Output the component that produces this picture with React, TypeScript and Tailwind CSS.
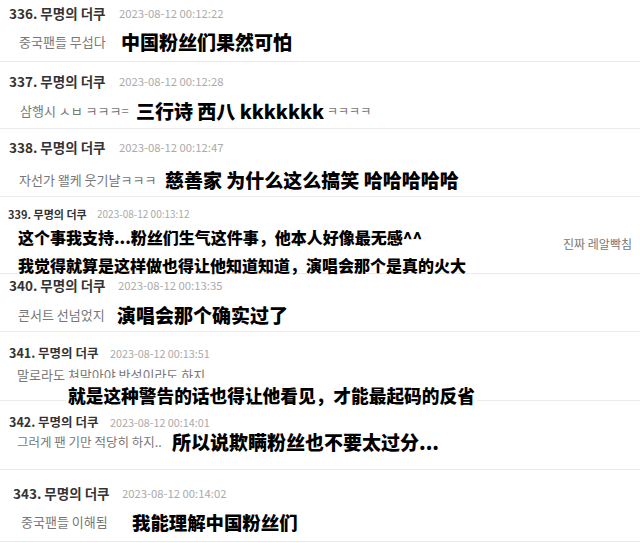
const kr = "font-['Noto_Sans_CJK_KR','Noto_Sans_CJK_SC',sans-serif]";
const zh = "font-['Noto_Sans_CJK_SC',sans-serif] font-black text-black";

function Head({
  no,
  time,
  nameW,
  pl,
  size = "text-[13.5px]",
  dateSize = "text-[11.3px]",
  lead = "leading-[20px]",
}: {
  no: number;
  time: string;
  nameW: string;
  pl: string;
  size?: string;
  dateSize?: string;
  lead?: string;
}) {
  return (
    <div className={`flex items-center ${pl} ${lead} ${kr}`}>
      <span className={`${nameW} ${size} shrink-0 font-bold text-[#333]`}>{no}. 무명의 더쿠</span>
      <span className={`${dateSize} text-[#aaa]`}>{time}</span>
    </div>
  );
}

export default function App() {
  return (
    <div className="w-[640px] h-[543px] overflow-hidden bg-white">
      {/* 336 */}
      <div className="h-[62px] border-b border-[#ebebeb] pt-[3px]">
        <Head no={336} time="2023-08-12 00:12:22" nameW="w-[110px]" pl="pl-[9px]" />
        <div className="mt-[4px] flex items-center pl-[19px] leading-[30px]">
          <span className={`w-[102px] shrink-0 text-[13px] text-[#777] ${kr}`}>중국팬들 무섭다</span>
          <span className={`text-[19px] ${zh}`}>中国粉丝们果然可怕</span>
        </div>
      </div>

      {/* 337 */}
      <div className="h-[67px] border-b border-[#ebebeb] pt-[9px]">
        <Head no={337} time="2023-08-12 00:12:28" nameW="w-[110px]" pl="pl-[9px]" />
        <div className="mt-[5px] flex items-center pl-[20px] leading-[30px]">
          <span className={`w-[116px] shrink-0 text-[13px] text-[#777] ${kr}`}>삼행시 ㅅㅂ ㅋㅋㅋ=</span>
          <span className={`text-[19px] ${zh}`}>三行诗 西八 kkkkkkk</span>
          <span className={`ml-[3px] text-[12px] text-[#777] ${kr}`}>ㅋㅋㅋㅋ</span>
        </div>
      </div>

      {/* 338 */}
      <div className="h-[68px] border-b border-[#ebebeb] pt-[8px]">
        <Head no={338} time="2023-08-12 00:12:47" nameW="w-[110px]" pl="pl-[9px]" />
        <div className="mt-[8px] flex items-center pl-[19px] leading-[30px]">
          <span className={`w-[146px] shrink-0 text-[13px] text-[#777] ${kr}`}>자선가 왤케 웃기냘ㅋㅋㅋ</span>
          <span className={`text-[19px] ${zh}`}>慈善家 为什么这么搞笑 哈哈哈哈哈</span>
        </div>
      </div>

      {/* 339 */}
      <div className="h-[77px] border-b border-[#ebebeb] pt-[9px]">
        <Head
          no={339}
          time="2023-08-12 00:13:12"
          nameW="w-[89px]"
          pl="pl-[8px]"
          size="text-[11px]"
          dateSize="text-[10px]"
          lead="leading-[16px]"
        />
        <div className="mt-[6px] flex items-start pl-[18px]">
          <div className={`text-[16px] leading-[18px] ${zh}`}>
            <div>这个事我支持...粉丝们生气这件事，他本人好像最无感^^</div>
            <div className="mt-[10px]">我觉得就算是这样做也得让他知道知道，演唱会那个是真的火大</div>
          </div>
          <span className={`ml-auto mt-[6px] pr-[8px] text-[12px] leading-[20px] text-[#777] ${kr}`}>진짜 레알빡침</span>
        </div>
      </div>

      {/* 340 */}
      <div className="h-[58px] border-b border-[#ebebeb] pt-[4px]">
        <Head no={340} time="2023-08-12 00:13:35" nameW="w-[109px]" pl="pl-[9px]" lead="leading-[14px]" />
        <div className="mt-[8px] flex items-center pl-[18px] leading-[30px]">
          <span className={`w-[99px] shrink-0 text-[13px] text-[#777] ${kr}`}>콘서트 선넘었지</span>
          <span className={`text-[19px] ${zh}`}>演唱会那个确实过了</span>
        </div>
      </div>

      {/* 341 */}
      <div className="relative h-[69px] border-b border-[#ebebeb] pt-[11px]">
        <Head no={341} time="2023-08-12 00:13:51" nameW="w-[101px]" pl="pl-[9px]" size="text-[12.5px]" dateSize="text-[10.8px]" />
        <div className={`mt-[2px] pl-[17px] text-[13px] leading-[20px] text-[#777] ${kr}`}>말로라도 쳐맞아야 반성이라도 하지</div>
        <div className={`absolute left-[66px] top-[46px] h-[34px] bg-white px-[2px] text-[17.7px] leading-[34px] ${zh}`}>
          就是这种警告的话也得让他看见，才能最起码的反省
        </div>
      </div>

      {/* 342 */}
      <div className="h-[69px] border-b border-[#ebebeb] pt-[12px]">
        <Head
          no={342}
          time="2023-08-12 00:14:01"
          nameW="w-[101px]"
          pl="pl-[9px]"
          size="text-[12.5px]"
          dateSize="text-[10.8px]"
          lead="leading-[18px]"
        />
        <div className="flex items-center pl-[17px] leading-[22px]">
          <span className={`w-[155px] shrink-0 text-[12.5px] text-[#777] ${kr}`}>그러게 팬 기만 적당히 하지..</span>
          <span className={`text-[19px] ${zh}`}>所以说欺瞒粉丝也不要太过分...</span>
        </div>
      </div>

      {/* 343 */}
      <div className="h-[72px] border-b border-[#ebebeb] pt-[13px]">
        <Head no={343} time="2023-08-12 00:14:02" nameW="w-[109px]" pl="pl-[13px]" />
        <div className="mt-[4px] flex items-center pl-[21px] leading-[30px]">
          <span className={`w-[111px] shrink-0 text-[13px] text-[#777] ${kr}`}>중국팬들 이해됨</span>
          <span className={`text-[18.4px] ${zh}`}>我能理解中国粉丝们</span>
        </div>
      </div>
    </div>
  );
}
